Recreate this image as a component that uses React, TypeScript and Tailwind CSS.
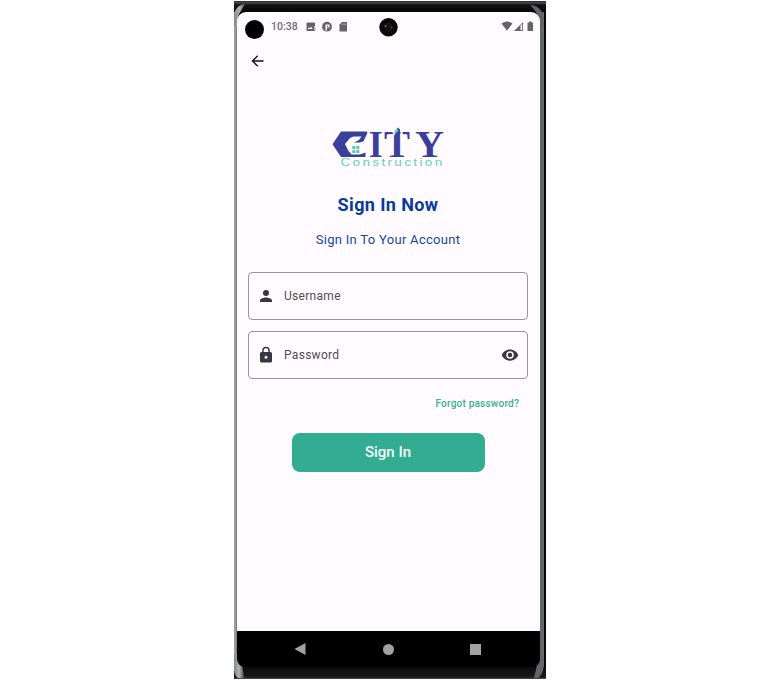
import React from "react";

function Logo() {
  return (
    <svg className="overflow-visible" width="116" height="44" viewBox="330 125 116 44" aria-label="City Construction">
      <g fill="#3a3f9b">
        <path d="M341 131.500H366.700L367.500 132.800L363.500 141.300L360 142.500H354L359 140L361.500 136.500H353.500L350 138L345 144L348.500 151L351.500 154.500H360L365.500 152.500V157H341L332.500 144.300Z" />
        <g fontFamily="'Liberation Serif', serif" fontWeight="700">
          <text x="368.700" y="157" fontSize="38" textLength="14" lengthAdjust="spacingAndGlyphs">I</text>
          <text x="384" y="157" fontSize="38" textLength="26" lengthAdjust="spacingAndGlyphs">T</text>
          <text x="415" y="157" fontSize="38" textLength="29" lengthAdjust="spacingAndGlyphs">Y</text>
        </g>
        <path d="M394.500 132.500L397.700 127.500L400 129.500V134H394.500Z" />
      </g>
      <path d="M391.500 130.500L393 133.500L395 135.500V132zM403.500 130.500L402.500 133.500L400.500 135.500V131z" fill="#fffbff" />
      <path d="M393.300 133.500L397.500 128.600L398.500 130.700L395.500 133.800Z" fill="#52d5b0" />
      <path d="M352.300 146h3v3h-3zM356.300 146h3v3h-3zM352.300 150h3v3h-3zM356.300 150h3v3h-3z" fill="#52cfae" />
      <text x="340.500" y="166" fontFamily="'Liberation Sans', sans-serif" fontSize="10.800" letterSpacing="1.900" fill="#5fd3b6" textLength="104" lengthAdjust="spacingAndGlyphs">Construction</text>
    </svg>
  );
}

function StatusBar() {
  return (
    <div className="flex h-[30px] items-center pl-[8px] pr-[5px]">
      <div className="mt-[5px] size-[19px] rounded-full bg-black" />
      <span className="ml-[7px] w-[27px] pt-px text-[10.500px] leading-none font-medium text-[#716c73]">10:38</span>
      <svg className="ml-[7px]" width="44" height="12" viewBox="305 21 44 12" fill="#666367">
        <path fillRule="evenodd" d="M307.500 22.500h6.500q1 0 1 1v3h-1v4.500h-6.500q-1 0-1-1v-6.500q0-1 1-1zM307.700 29h5l-1.600-2.200-1.300 1.500-1-1z" />
        <path d="M314.300 27.500h1v2h-1zM314.300 30h1v1h-1z" />
        <circle cx="327" cy="26.700" r="4.900" />
        <path d="M325.500 24.500h4v3h-2.500v3h-1.500z" fill="#fffbff" />
        <path d="M326.800 25.700h1.500v1h-1.500z" />
        <path d="M342 22h5v9.500h-7.500v-7z" />
        <path d="M342.200 23.500v1.500M344 23.500v1.500M345.700 23.500v1.500" stroke="#e5e0e5" strokeWidth=".6" />
      </svg>
      <div className="ml-auto">
        <svg width="34" height="12" viewBox="501 21 34 12" fill="#666467">
          <path d="M501.500 23.500q5.500-4 11 0l-5.500 7.300z" />
          <path d="M514 31l9-9v9z" />
          <path d="M520.500 25.500l1.700-1.700V30.200h-1.700z" fill="#f5f1f5" />
          <path d="M529 21.500h2.500v1h1.500V31h-5.500v-8.500h1.500z" />
        </svg>
      </div>
    </div>
  );
}

function Camera() {
  return (
    <svg className="absolute left-[142px] top-[6px]" width="20" height="20" viewBox="0 0 20 20">
      <circle cx="9.500" cy="9.300" r="9.200" fill="#090909" />
      <circle cx="9.500" cy="9.300" r="4.500" fill="#19120e" />
      <circle cx="6.500" cy="8" r="1.100" fill="#65706c" />
      <circle cx="12.500" cy="9.500" r="1" fill="#713f1c" />
    </svg>
  );
}

function Field({ label, icon, trailing }: { label: string; icon: React.ReactNode; trailing?: React.ReactNode }) {
  return (
    <div className="flex h-[48px] w-[280px] items-center rounded-[4px] border border-[#98959a] px-[8px]">
      <span className="flex w-[18px] justify-center">{icon}</span>
      <span className="ml-[9px] text-[12px] leading-none tracking-[0.300px] text-[#504c54]">{label}</span>
      <span className="ml-auto">{trailing}</span>
    </div>
  );
}

function Bezel() {
  return (
    <svg className="absolute inset-0" width="312" height="678" viewBox="234 1 312 678">
      <defs>
        <linearGradient id="top" x1="0" y1="0" x2="0" y2="1">
          <stop offset="0" stopColor="#303332" />
          <stop offset=".2" stopColor="#424544" />
          <stop offset=".35" stopColor="#111212" />
          <stop offset="1" stopColor="#050505" />
        </linearGradient>
        <linearGradient id="bottom" x1="0" y1="0" x2="0" y2="1">
          <stop offset="0" stopColor="#0b0b0b" />
          <stop offset=".85" stopColor="#1b1b1b" />
          <stop offset="1" stopColor="#555" />
        </linearGradient>
        <linearGradient id="glint" x1="0" y1="0" x2="1" y2="0">
          <stop offset="0" stopColor="#858787" />
          <stop offset=".5" stopColor="#b2b4b4" />
          <stop offset="1" stopColor="#4e5151" />
        </linearGradient>
      </defs>
      <path d="M234 1h312v678H234z" fill="#080808" />
      <path d="M234 1h312v11H234z" fill="url(#top)" />
      <path d="M234 667h312v12H234z" fill="url(#bottom)" />
      <path d="M234 12h3v655h-3z" fill="#9b9d9d" />
      <path d="M236 12h1v655h-1z" fill="#7c7e7e" />
      <path d="M540 12h3.500v655H540z" fill="#626565" />
      <path d="M543 12h.7v655h-.7z" fill="#858787" />
      <path d="M234 26V14Q236 5 245 4L241 11Q237 15 237 27z" fill="url(#glint)" />
      <path d="M530 5Q543 6 543.500 20V27H540Q540 14 530 5z" fill="#626565" />
      <path d="M234 654H237L242 664L244 678H238Q234 675 234 669z" fill="url(#glint)" />
      <path d="M543.500 654H540L537 665L534 678H538Q543 674 543.500 668z" fill="#626565" />
    </svg>
  );
}

export default function App() {
  return (
    <div className="flex h-[680px] w-[780px] justify-center bg-white pt-px font-['Roboto',sans-serif]">
      <div className="relative h-[678px] w-[312px] pt-[11px] pl-[3px]">
        <Bezel />
        <main className="relative h-[619px] w-[303px] rounded-t-[9px] bg-[#fffbff]">
          <StatusBar />
          <Camera />
          <div className="flex h-[38px] items-center pl-[14px]">
            <svg width="13" height="13" viewBox="0 0 13 13" fill="none" stroke="#17151a" strokeWidth="1.400">
              <path d="M12.500 6H1.500M6.700 .7L1.400 6L6.700 11.300" />
            </svg>
          </div>
          <div className="flex w-[302px] flex-col items-center pt-[45px]">
            <Logo />
            <h1 className="mt-[26px] text-[18px] leading-[20px] font-bold tracking-[0.400px] text-[#063b99]">Sign In Now</h1>
            <p className="mt-[17px] text-[13px] leading-[16px] tracking-[0.300px] text-[#1648a0]">Sign In To Your Account</p>
            <div className="mt-[24px] flex flex-col gap-[11px]">
              <Field label="Username" icon={
                <svg width="18" height="18" viewBox="0 0 24 24" fill="#39363d"><path d="M12 12a4 4 0 1 0 0-8 4 4 0 0 0 0 8zm0 2c-2.670 0-8 1.340-8 4v2h16v-2c0-2.660-5.330-4-8-4z" /></svg>
              } />
              <Field label="Password" icon={
                <svg width="18" height="18" viewBox="0 0 24 24" fill="#39363d"><path d="M18 8h-1V6A5 5 0 0 0 7 6v2H6a2 2 0 0 0-2 2v10c0 1.100.9 2 2 2h12a2 2 0 0 0 2-2V10a2 2 0 0 0-2-2zm-6 9a2 2 0 1 1 0-4 2 2 0 0 1 0 4zm3.100-9H8.900V6a3.100 3.100 0 0 1 6.200 0v2z" /></svg>
              } trailing={
                <svg width="18" height="18" viewBox="0 0 24 24" fill="#39363d"><path d="M12 4.500C7 4.500 2.730 7.610 1 12c1.730 4.390 6 7.500 11 7.500s9.270-3.110 11-7.500c-1.730-4.390-6-7.500-11-7.500zM12 17a5 5 0 1 1 0-10 5 5 0 0 1 0 10zm0-8a3 3 0 1 0 0 6 3 3 0 0 0 0-6z" /></svg>
              } />
            </div>
            <a className="mt-[18px] mr-[20px] self-end text-[10px] leading-[14px] font-medium tracking-[0.220px] text-[#35b48d]">Forgot password?</a>
            <button className="mt-[22px] h-[39px] w-[193px] rounded-[8px] bg-[#32ad91] text-[15px] font-medium text-[#f7fffc]">Sign In</button>
          </div>
        </main>
        <nav className="relative flex h-[36px] w-[303px] items-center rounded-b-[8px] bg-black">
          <svg className="ml-[57px]" width="12" height="14" viewBox="0 0 12 14"><path d="M.5 7L11.500 1v12z" fill="#a2a2a2" /></svg>
          <div className="ml-[76.500px] size-[11px] rounded-full bg-[#a2a2a2]" />
          <div className="ml-[76.500px] size-[11px] bg-[#a2a2a2]" />
        </nav>
      </div>
    </div>
  );
}
